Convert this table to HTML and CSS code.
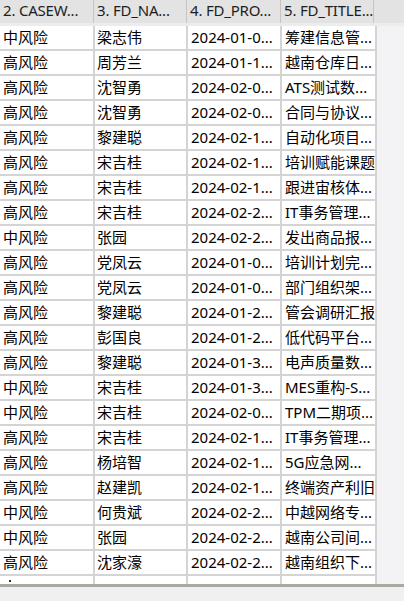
FILE: index.html
```html
<!DOCTYPE html>
<html lang="zh-CN">
<head>
<meta charset="utf-8">
<title>Grid</title>
<link rel="stylesheet" href="styles.css">
</head>
<body>
<div class="view">
  <div class="head">
    <div class="hcell c1">2. CASEW...</div>
    <div class="hcell c2">3. FD_NA...</div>
    <div class="hcell c3">4. FD_PRO...</div>
    <div class="hcell c4">5. FD_TITLE...</div>
  </div>
  <div class="band"></div>
  <div class="body">
    <div class="rows">
      <div class="row"><div class="cell">中风险</div><div class="cell">梁志伟</div><div class="cell">2024-01-0...</div><div class="cell">筹建信息管...</div></div>
      <div class="row"><div class="cell">高风险</div><div class="cell">周芳兰</div><div class="cell">2024-01-1...</div><div class="cell">越南仓库日...</div></div>
      <div class="row"><div class="cell">高风险</div><div class="cell">沈智勇</div><div class="cell">2024-02-0...</div><div class="cell">ATS测试数...</div></div>
      <div class="row"><div class="cell">高风险</div><div class="cell">沈智勇</div><div class="cell">2024-02-0...</div><div class="cell">合同与协议...</div></div>
      <div class="row"><div class="cell">高风险</div><div class="cell">黎建聪</div><div class="cell">2024-02-1...</div><div class="cell">自动化项目...</div></div>
      <div class="row"><div class="cell">高风险</div><div class="cell">宋吉桂</div><div class="cell">2024-02-1...</div><div class="cell">培训赋能课题</div></div>
      <div class="row"><div class="cell">高风险</div><div class="cell">宋吉桂</div><div class="cell">2024-02-1...</div><div class="cell">跟进宙核体...</div></div>
      <div class="row"><div class="cell">高风险</div><div class="cell">宋吉桂</div><div class="cell">2024-02-2...</div><div class="cell">IT事务管理...</div></div>
      <div class="row"><div class="cell">中风险</div><div class="cell">张园</div><div class="cell">2024-02-2...</div><div class="cell">发出商品报...</div></div>
      <div class="row"><div class="cell">高风险</div><div class="cell">党凤云</div><div class="cell">2024-01-0...</div><div class="cell">培训计划完...</div></div>
      <div class="row"><div class="cell">高风险</div><div class="cell">党凤云</div><div class="cell">2024-01-0...</div><div class="cell">部门组织架...</div></div>
      <div class="row"><div class="cell">高风险</div><div class="cell">黎建聪</div><div class="cell">2024-01-2...</div><div class="cell">管会调研汇报</div></div>
      <div class="row"><div class="cell">高风险</div><div class="cell">彭国良</div><div class="cell">2024-01-2...</div><div class="cell">低代码平台...</div></div>
      <div class="row"><div class="cell">高风险</div><div class="cell">黎建聪</div><div class="cell">2024-01-3...</div><div class="cell">电声质量数...</div></div>
      <div class="row"><div class="cell">中风险</div><div class="cell">宋吉桂</div><div class="cell">2024-01-3...</div><div class="cell">MES重构-S...</div></div>
      <div class="row"><div class="cell">中风险</div><div class="cell">宋吉桂</div><div class="cell">2024-02-0...</div><div class="cell">TPM二期项...</div></div>
      <div class="row"><div class="cell">高风险</div><div class="cell">宋吉桂</div><div class="cell">2024-02-1...</div><div class="cell">IT事务管理...</div></div>
      <div class="row"><div class="cell">高风险</div><div class="cell">杨培智</div><div class="cell">2024-02-1...</div><div class="cell">5G应急网...</div></div>
      <div class="row"><div class="cell">高风险</div><div class="cell">赵建凯</div><div class="cell">2024-02-1...</div><div class="cell">终端资产利旧</div></div>
      <div class="row"><div class="cell">中风险</div><div class="cell">何贵斌</div><div class="cell">2024-02-2...</div><div class="cell">中越网络专...</div></div>
      <div class="row"><div class="cell">中风险</div><div class="cell">张园</div><div class="cell">2024-02-2...</div><div class="cell">越南公司间...</div></div>
      <div class="row"><div class="cell">高风险</div><div class="cell">沈家濠</div><div class="cell">2024-02-2...</div><div class="cell">越南组织下...</div></div>
      <div class="row"><div class="cell"><span class="dot"></span></div><div class="cell"></div><div class="cell"></div><div class="cell"></div></div>
    </div>
  </div>
  <div class="hbar"></div>
</div>
</body>
</html>
```
FILE: styles.css
```css
html, body {
  margin: 0;
  padding: 0;
}
body {
  width: 404px;
  height: 601px;
  overflow: hidden;
  background: #f3f3f5;
  font-family: "Noto Sans", "Noto Sans CJK SC", sans-serif;
  font-size: 15px;
  color: #000;
}
.view {
  display: flex;
  flex-direction: column;
  height: 601px;
}
.head {
  display: flex;
  height: 23px;
  background: #e3e3e3;
  flex: none;
}
.hcell {
  box-sizing: border-box;
  height: 23px;
  line-height: 21px;
  padding-left: 3px;
  border-right: 1px solid #c4c4c4;
  white-space: nowrap;
  overflow: hidden;
  letter-spacing: -0.2px;
  color: #1e1e1e;
}
.hcell.c1 { width: 94px; }
.hcell.c2 { width: 93px; }
.hcell.c3 { width: 94px; }
.hcell.c4 { width: 93px; }
.band {
  height: 3px;
  background: #ececec;
  flex: none;
}
.body {
  height: 558px;
  overflow: hidden;
  flex: none;
}
.rows {
  width: 377px;
  background: #d4d4d4;
}
.row {
  display: grid;
  grid-template-columns: 95px 93px 94px 95px;
  height: 25px;
}
.cell {
  box-sizing: border-box;
  background: #fff;
  border-right: 2px solid #d4d4d4;
  border-bottom: 2px solid #d4d4d4;
  padding-left: 3px;
  line-height: 22px;
  white-space: nowrap;
  overflow: hidden;
}
.row .cell:nth-child(2) { padding-left: 2px; }
.dot {
  display: block;
  width: 2px;
  height: 2px;
  margin: 4px 0 0 6px;
  background: #333;
}
.hbar {
  flex: 1;
  border-top: 3px solid #a9a8a1;
  background: #f0f0f0;
}
```
